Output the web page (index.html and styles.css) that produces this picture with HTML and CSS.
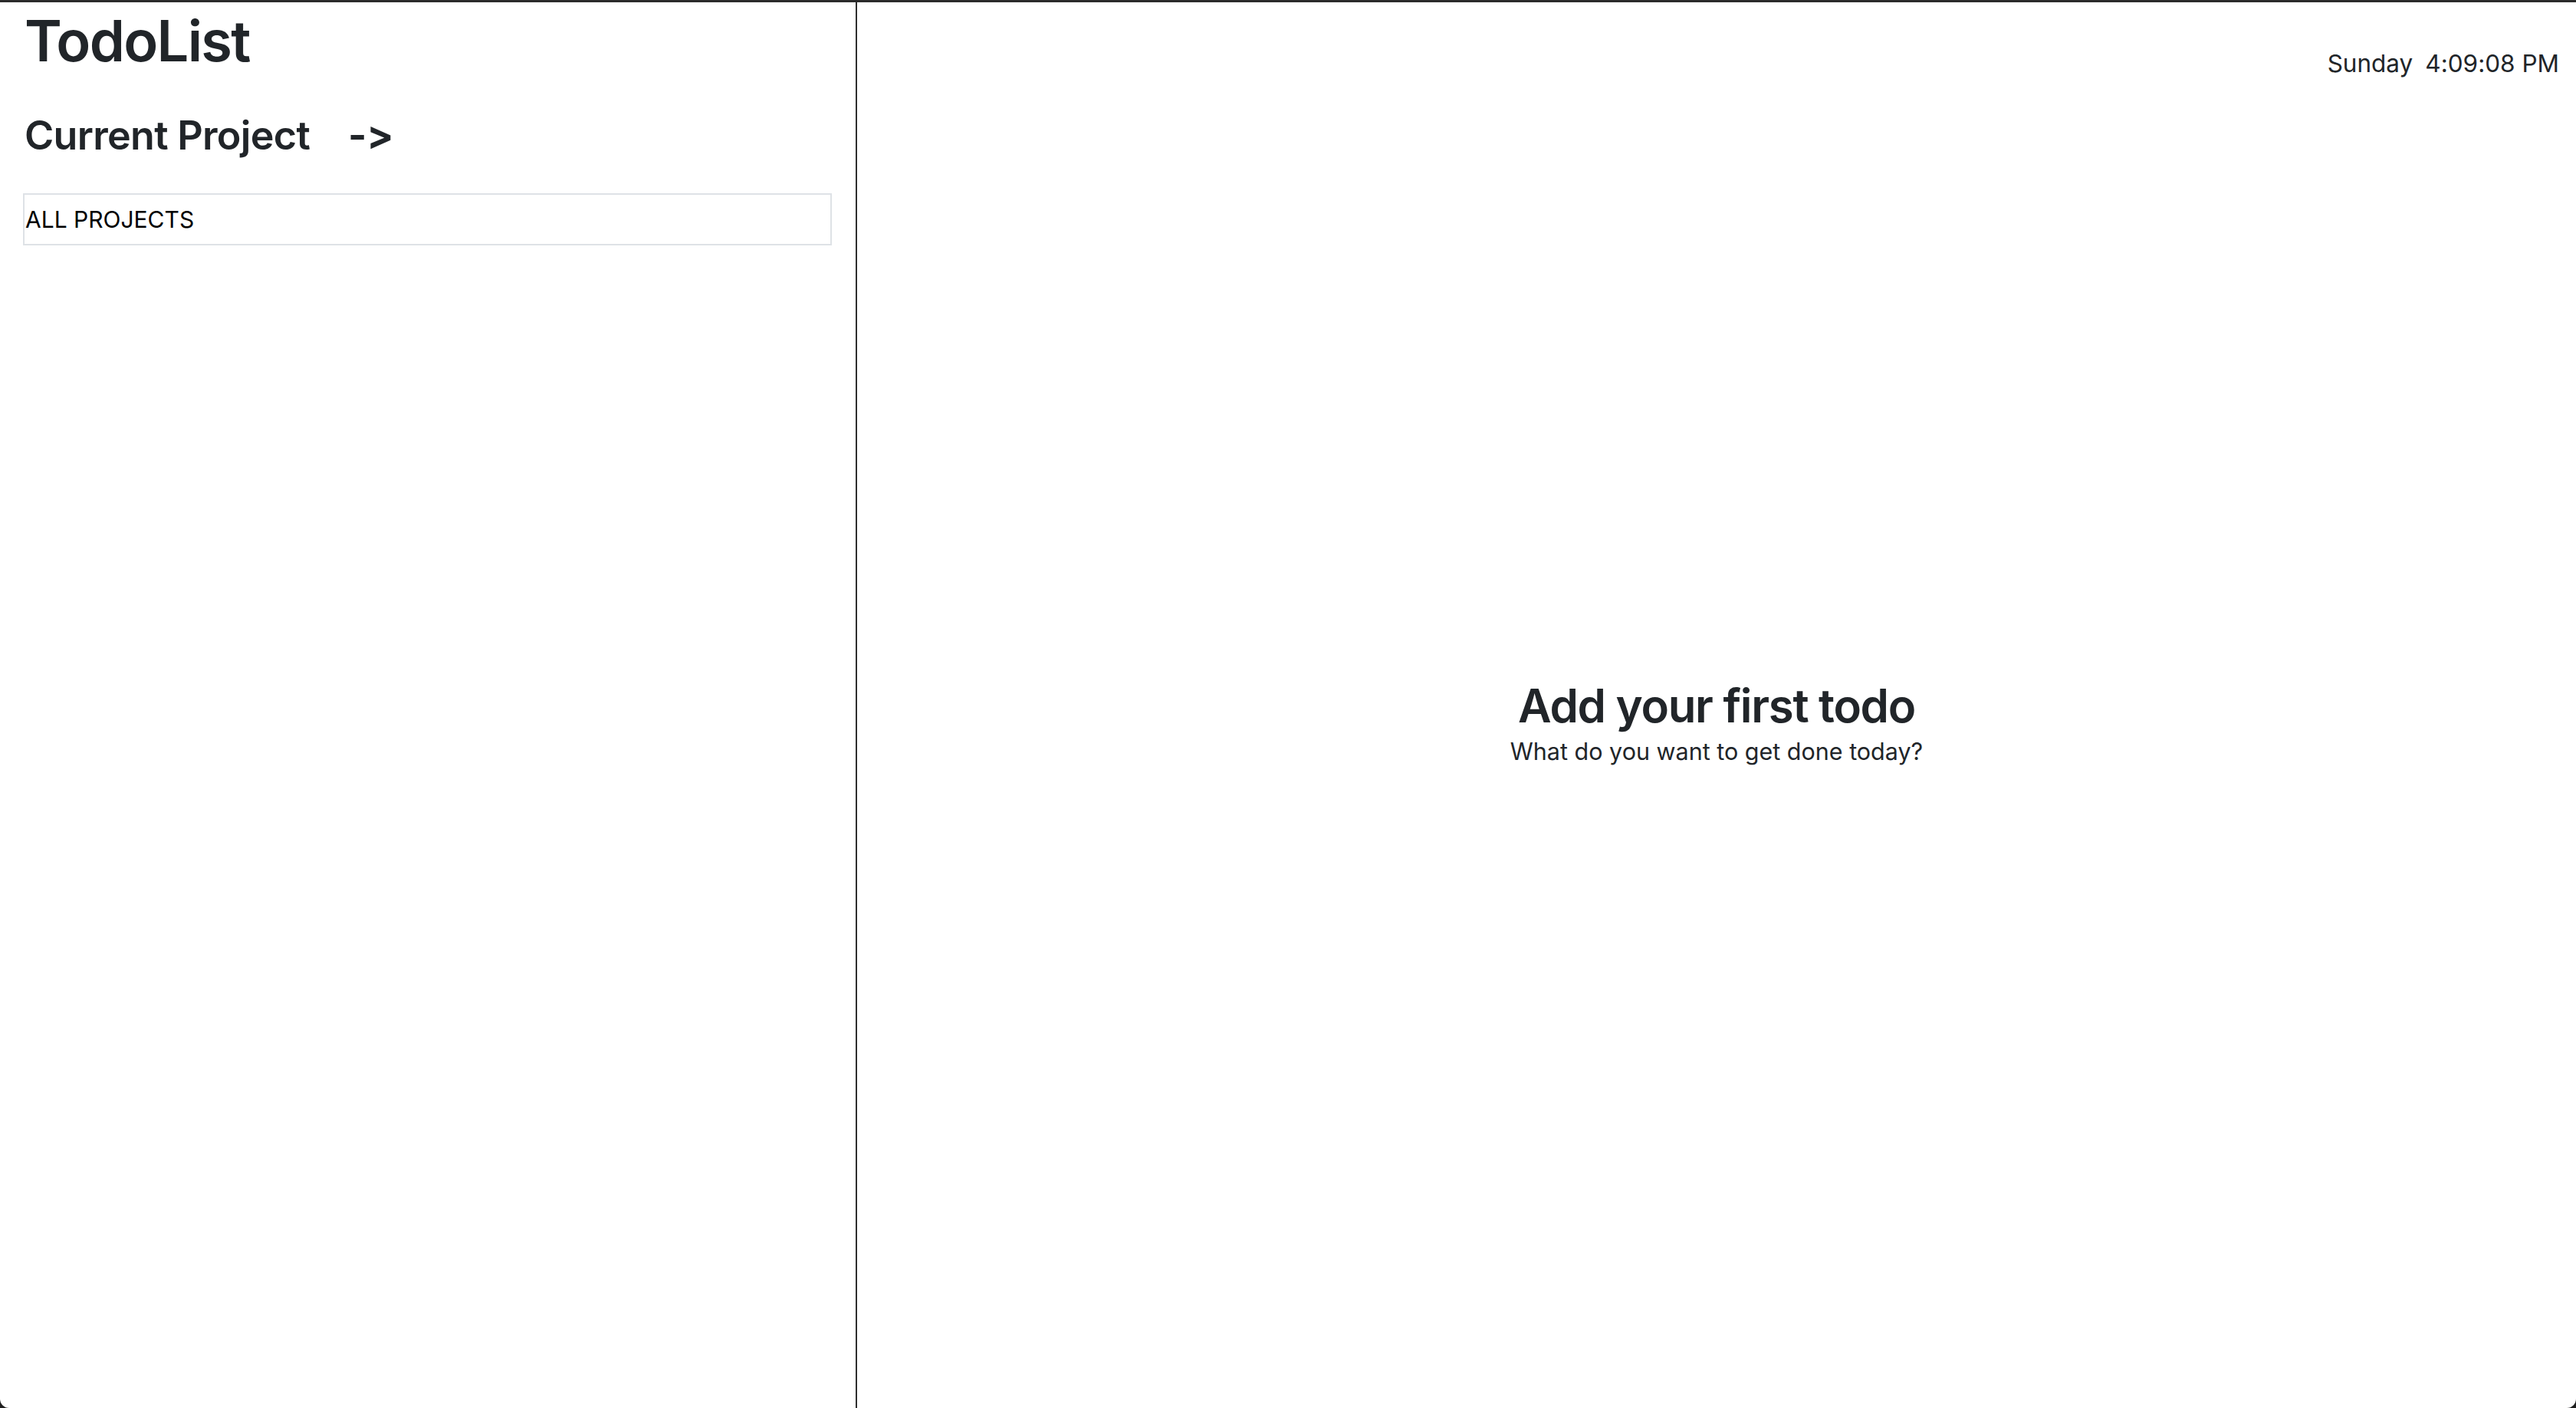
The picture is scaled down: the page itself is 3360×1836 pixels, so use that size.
FILE: index.html
```html
<!DOCTYPE html>
<html lang="en">
<head>
<meta charset="utf-8">
<title>TodoList</title>
<link rel="stylesheet" href="styles.css">
</head>
<body>
<div class="app">
  <aside class="sidebar">
    <h1 class="brand">TodoList</h1>
    <div class="current">
      <h3 class="current-title">Current Project</h3>
      <span class="arrow">-&gt;</span>
    </div>
    <ul class="projects">
      <li class="project">ALL PROJECTS</li>
    </ul>
  </aside>
  <main class="main">
    <div class="clock"><span class="day">Sunday</span><span class="time">4:09:08 PM</span></div>
    <div class="empty">
      <h2 class="empty-title">Add your first todo</h2>
      <p class="empty-sub">What do you want to get done today?</p>
    </div>
  </main>
</div>
</body>
</html>
```
FILE: styles.css
```css
html {
  background: #1f1f1f;
  height: 100%;
}
body {
  margin: 0;
  height: 100%;
  font-family: Inter, "Liberation Sans", sans-serif;
  font-feature-settings: "calt" 0, "liga" 0;
  font-variant-ligatures: none;
  color: #212529;
}
.app {
  box-sizing: border-box;
  height: 100%;
  border-top: 3px solid #2b2b2b;
  background: #fff;
  border-radius: 0 0 12px 12px;
  display: grid;
  grid-template-columns: 1118px 1fr;
  overflow: hidden;
}
.sidebar {
  border-right: 2px solid #2e2e2e;
  padding: 0 31px 0 30px;
  display: flex;
  flex-direction: column;
}
.brand {
  margin: 4px 0 0 2px;
  font-size: 74px;
  font-weight: 600;
  line-height: 92px;
  letter-spacing: -1.7px;
}
.current {
  display: flex;
  align-items: baseline;
  margin-top: 46px;
  padding-left: 2px;
}
.current-title {
  margin: 0;
  font-size: 52px;
  font-weight: 600;
  line-height: 64px;
  letter-spacing: -0.7px;
}
.arrow {
  margin-left: 50px;
  font-size: 52px;
  font-weight: 700;
}
.projects {
  list-style: none;
  margin: 43px 0 0;
  padding: 0;
}
.project {
  border: 2px solid #dee2e6;
  height: 68px;
  box-sizing: border-box;
  display: flex;
  align-items: center;
  font-size: 30px;
  color: #000;
  padding-left: 1px;
}
.main {
  display: flex;
  flex-direction: column;
}
.clock {
  display: flex;
  justify-content: flex-end;
  gap: 16px;
  padding: 60px 22px 0 0;
  font-size: 31.5px;
  line-height: 40px;
}
.empty {
  flex: 1;
  display: flex;
  flex-direction: column;
  align-items: center;
  justify-content: center;
  padding-bottom: 56px;
}
.empty-title {
  margin: 0;
  font-size: 60px;
  font-weight: 600;
  line-height: 72px;
  letter-spacing: -1.3px;
}
.empty-sub {
  margin: 4px 0 0;
  font-size: 30.5px;
  line-height: 40px;
}
```
